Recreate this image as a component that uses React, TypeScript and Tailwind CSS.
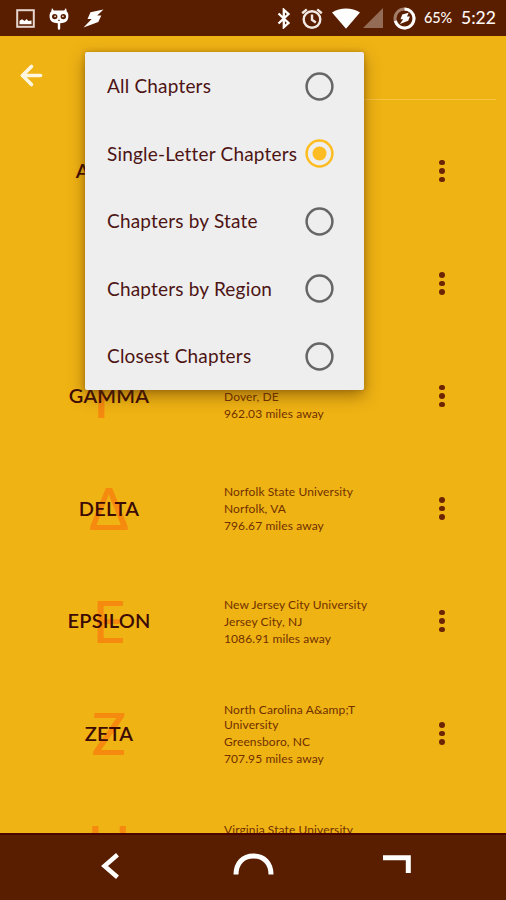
import { ArrowLeft } from 'lucide-react'
import clsx from 'clsx'

type Chapter = {
  name: string
  letter: string
  school: string
  city: string
  distance: string
}

const chapters: Chapter[] = [
  { name: 'ALPHA', letter: 'A', school: '', city: '', distance: '' },
  { name: 'BETA', letter: 'B', school: '', city: '', distance: '' },
  { name: 'GAMMA', letter: 'Γ', school: 'Delaware State University', city: 'Dover, DE', distance: '962.03 miles away' },
  { name: 'DELTA', letter: 'Δ', school: 'Norfolk State University', city: 'Norfolk, VA', distance: '796.67 miles away' },
  { name: 'EPSILON', letter: 'E', school: 'New Jersey City University', city: 'Jersey City, NJ', distance: '1086.91 miles away' },
  { name: 'ZETA', letter: 'Z', school: 'North Carolina A&amp;T University', city: 'Greensboro, NC', distance: '707.95 miles away' },
  { name: '', letter: 'H', school: 'Virginia State University', city: '', distance: '' },
]

const filters = ['All Chapters', 'Single-Letter Chapters', 'Chapters by State', 'Chapters by Region', 'Closest Chapters']

function StatusBar() {
  return (
    <div className="flex h-9 shrink-0 items-center justify-between bg-[#591e00] pr-[11px] pl-4 text-[#fff8f4]">
      <div className="flex items-center gap-[14px]">
        {/* Picture */}
        <svg className="h-[19px] w-[19px]" viewBox="0 0 19 19" fill="none">
          <rect x="1.2" y="1.2" width="16.6" height="16.6" stroke="#e6d5cd" strokeWidth="2" />
          <path d="M3.5 15.2v-3.4l2.5-1.6 2.6 1.9 2-2 1.8 1.8 3.1-.4v3.7z" fill="#fff" />
        </svg>
        {/* Cid */}
        <svg className="h-[23px] w-[20px]" viewBox="0 0 20 23">
          <path d="M3 1l1.8 2.6h10.4L17 1l.8 3.6c2 1.5 2.2 6.5.4 9-1.2 1.8-4 2.6-7 2.7v5.2a1.2 1.2 0 0 1-2.4 0v-5.2c-3-.1-5.8-.9-7-2.7-1.8-2.5-1.6-7.5.4-9z" fill="#fff" />
          <circle cx="5.7" cy="9.6" r="2.7" fill="#591e00" />
          <circle cx="14.3" cy="9.6" r="2.7" fill="#591e00" />
          <circle cx="6.1" cy="9.4" r=".8" fill="#fff" />
          <circle cx="13.9" cy="9.4" r=".8" fill="#fff" />
          <path d="M9.1 13.3h1.8" stroke="#591e00" strokeWidth="1" />
        </svg>
        <svg className="h-[19px] w-[21px]" viewBox="0 0 21 19" fill="#fff">
          <path d="M20.5.5L7.5 3.3 4.5 10h4.2L.5 18.5l14.8-5.5 3-6.4h-4.1z" />
        </svg>
      </div>

      <div className="flex items-center">
        <svg className="h-[21px] w-[14px]" viewBox="0 0 14 21" fill="none" stroke="#fff" strokeWidth="2.3">
          <path d="M1.5 5.5l10 9.5-4.7 4.2V1.8l4.7 4.2-10 9.5" />
        </svg>
        <svg className="ml-[10px] h-[21px] w-[22px]" viewBox="0 0 22 21" fill="none" stroke="#f2e9e5" strokeWidth="2.4">
          <circle cx="11" cy="11.5" r="8.3" />
          <path d="M11 6.5v5.3l3.8 2.7M1.2 5.2l4.6-3.8M20.8 5.2l-4.6-3.8" />
        </svg>
        <svg className="ml-[9px] h-[21px] w-[28px]" viewBox="0 0 28 21" fill="#fff">
          <path d="M0 4.500C8-.9 20-.9 28 4.500L14 20.800z" />
        </svg>
        <svg className="ml-[3px] h-[20px] w-[20px]" viewBox="0 0 20 20" fill="#946b54">
          <path d="M20 0v20H0z" />
        </svg>
        <svg className="ml-[10px] h-[23px] w-[23px]" viewBox="0 0 23 23" fill="none" strokeWidth="3">
          <circle cx="11.5" cy="11.5" r="9.5" stroke="#a37d69" />
          <path d="M11.5 2a9.5 9.5 0 1 1-9.2 11.9" stroke="#fff" />
          <path d="M15.7 5.7l-6.4 1.7-1.8 4.8h2.7l-3.3 4.9 8.3-3.3 1.7-4.4h-2.9z" fill="#fff" />
        </svg>
        <span className="ml-2 w-[30px] text-[14.5px] leading-none font-medium tracking-[-0.1px] whitespace-nowrap">65%</span>
        <span className="ml-[7px] w-[34px] text-[17.5px] leading-none font-medium whitespace-nowrap">5:22</span>
      </div>
    </div>
  )
}

function MoreButton() {
  return (
    <button className="flex w-5 flex-col items-center gap-[3px]">
      <span className="h-[5.5px] w-[5.5px] rounded-full bg-[#6b2400]" />
      <span className="h-[5.5px] w-[5.5px] rounded-full bg-[#6b2400]" />
      <span className="h-[5.5px] w-[5.5px] rounded-full bg-[#6b2400]" />
    </button>
  )
}

function ChapterRow({ chapter }: { chapter: Chapter }) {
  return (
    <div className="flex h-[112.5px] shrink-0 items-center pl-[22px]">
      <div className="relative flex h-full w-[174px] items-center justify-center">
        <span className="text-[57px] leading-none font-medium text-[#f58a0f]">{chapter.letter}</span>
        <span className="absolute inset-0 flex items-center justify-center pb-[2px] text-[20px] font-semibold tracking-[0.2px] text-[#3d0b06]">
          {chapter.name}
        </span>
      </div>
      <div className="ml-7 flex w-[150px] flex-col gap-[2px] text-[12px] leading-[15px] tracking-[0.1px] text-[#713000]">
        <p className="min-h-[15px]">{chapter.school}</p>
        <p className="min-h-[15px]">{chapter.city}</p>
        <p className="min-h-[15px]">{chapter.distance}</p>
      </div>
      <div className="ml-[58px] pb-px">
        <MoreButton />
      </div>
    </div>
  )
}

function Radio({ checked }: { checked: boolean }) {
  return (
    <svg
      className={clsx('h-[29px] w-[29px] shrink-0', checked ? 'text-[#fdbd22]' : 'text-[#666666]')}
      viewBox="0 0 29 29"
      fill="none"
    >
      <circle cx="14.5" cy="14.5" r="12.9" stroke="currentColor" strokeWidth="2.5" />
      {checked && <circle cx="14.5" cy="14.5" r="7" fill="currentColor" />}
    </svg>
  )
}

function FilterMenu({ selected }: { selected: string }) {
  return (
    <div className="absolute top-[52px] left-[85px] h-[338px] w-[279px] rounded-[2px] bg-[#eeeeee] shadow-[0_6px_16px_rgba(90,50,0,0.5),0_0_5px_rgba(90,50,0,0.3)]">
      {filters.map((label) => (
        <button key={label} className="flex h-[67.5px] w-full items-center justify-between pt-px pr-[30.5px] pl-[22px]">
          <span className="text-[19px] tracking-[0.19px] whitespace-nowrap text-[#4d1414]">{label}</span>
          <Radio checked={label === selected} />
        </button>
      ))}
    </div>
  )
}

function NavBar() {
  return (
    <div className="flex h-[67px] shrink-0 items-start justify-between border-t-2 border-[#4a0500] bg-[#591e00] pr-[95px] pl-[101px]">
      <svg className="mt-[18px] h-[26px] w-[18px]" viewBox="0 0 18 26" fill="none" stroke="#fff" strokeWidth="4.5">
        <path d="M16.5 1.8L3.5 13l13 11.2" />
      </svg>
      <svg className="mt-[18px] mr-[10px] ml-[14px] h-[22px] w-[41px]" viewBox="0 0 41 22" fill="none" stroke="#fff" strokeWidth="5">
        <path d="M3 21.5C3 10 10 3 20.5 3S38 10 38 21.5" />
      </svg>
      <svg className="mt-5 h-[18px] w-[28px]" viewBox="0 0 28 18" fill="none" stroke="#fff" strokeWidth="5">
        <path d="M0 2.8h25.3V18" />
      </svg>
    </div>
  )
}

export default function App() {
  return (
    <div className="relative flex h-[900px] w-[506px] flex-col overflow-hidden bg-[#efb314] font-['Lato',sans-serif]">
      <StatusBar />

      {/* Toolbar */}
      <div className="flex h-[79px] shrink-0 items-start pt-[24px] pl-[16px]">
        <button>
          <ArrowLeft className="h-[31px] w-[31px] text-[#fff6df]" strokeWidth={2.8} />
        </button>
        <div className="mt-[39px] mr-[10px] ml-[46px] h-px flex-1 bg-[#f7c540]" />
      </div>

      {/* Chapter list */}
      <div className="min-h-0 flex-1 overflow-hidden">
        {chapters.map((chapter) => (
          <ChapterRow key={chapter.letter} chapter={chapter} />
        ))}
      </div>

      <NavBar />
      <FilterMenu selected="Single-Letter Chapters" />
    </div>
  )
}
